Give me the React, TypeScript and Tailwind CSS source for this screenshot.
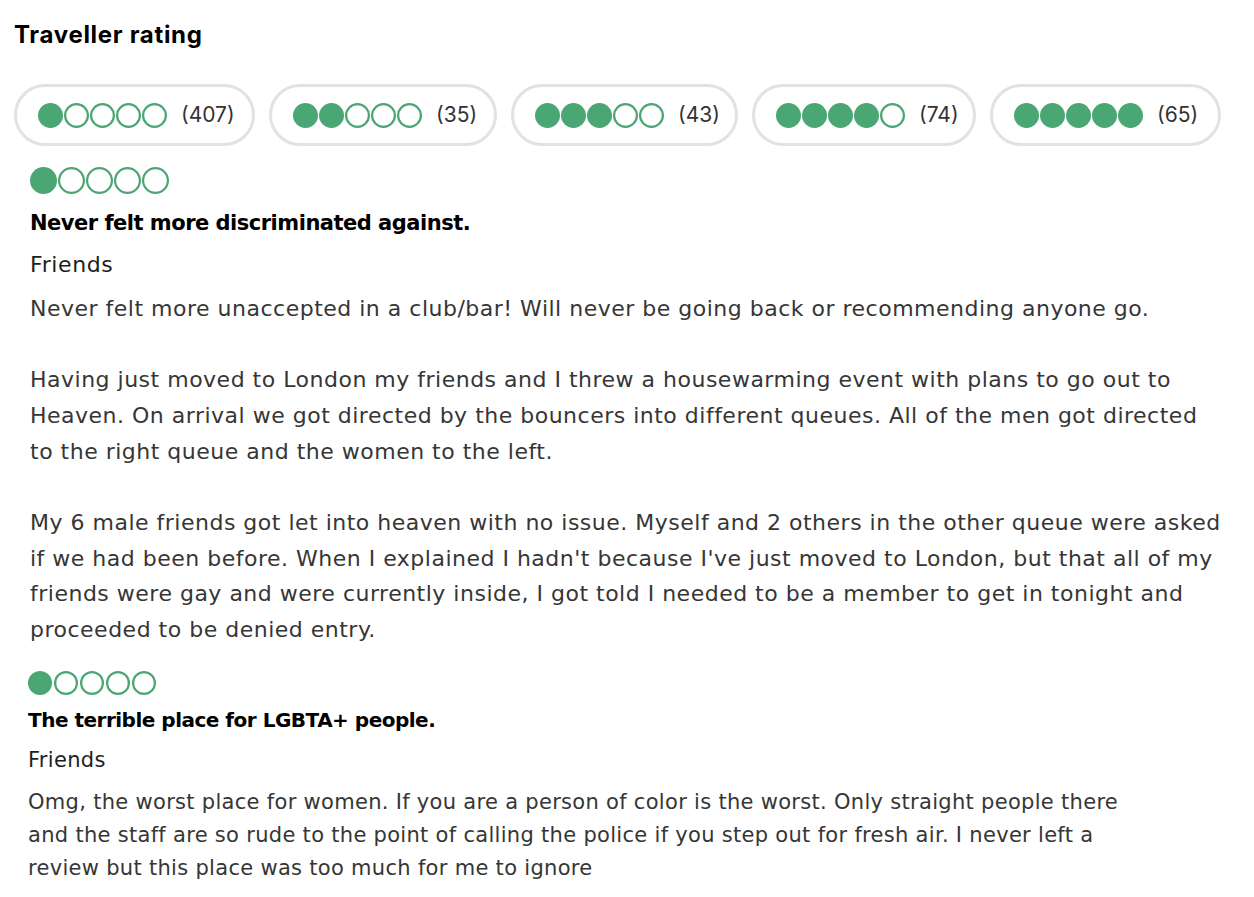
import React from "react";

const GREEN = "#4aa673";

interface BubblesProps {
  rating: number;
  size: number;
  step: number;
}

const Bubbles = ({ rating, size, step }: BubblesProps) => {
  const r = size / 2;
  const width = step * 4 + size;
  return (
    <svg width={width} height={size} viewBox={`0 0 ${width} ${size}`} className="block shrink-0">
      {[0, 1, 2, 3, 4].map((i) =>
        i < rating ? (
          <circle key={i} cx={i * step + r} cy={r} r={r} fill={GREEN} />
        ) : (
          <circle key={i} cx={i * step + r} cy={r} r={r - 1.1} fill="none" stroke={GREEN} strokeWidth={2.2} />
        )
      )}
    </svg>
  );
};

const filters = [
  { rating: 1, count: 407, width: "w-[241px]" },
  { rating: 2, count: 35, width: "w-[228px]" },
  { rating: 3, count: 43, width: "w-[227px]" },
  { rating: 4, count: 74, width: "w-[224px]" },
  { rating: 5, count: 65, width: "w-[231px]" },
];

const review1 = [
  "Never felt more unaccepted in a club/bar! Will never be going back or recommending anyone go.",
  "",
  "Having just moved to London my friends and I threw a housewarming event with plans to go out to",
  "Heaven. On arrival we got directed by the bouncers into different queues. All of the men got directed",
  "to the right queue and the women to the left.",
  "",
  "My 6 male friends got let into heaven with no issue. Myself and 2 others in the other queue were asked",
  "if we had been before. When I explained I hadn't because I've just moved to London, but that all of my",
  "friends were gay and were currently inside, I got told I needed to be a member to get in tonight and",
  "proceeded to be denied entry.",
];

const review2 = [
  "Omg, the worst place for women. If you are a person of color is the worst. Only straight people there",
  "and the staff are so rude to the point of calling the police if you step out for fresh air. I never left a",
  "review but this place was too much for me to ignore",
];

const App = () => {
  return (
    <div className="w-[1254px] h-[897px] bg-white overflow-hidden font-['DejaVu_Sans',sans-serif] text-[#363636]">
      <div className="pl-[14px] pt-[19px]">
        <h2 className="font-['Inter',sans-serif] text-[24px] leading-[32px] font-bold text-black tracking-[0.7px]">
          Traveller rating
        </h2>

        <div className="flex gap-[14px] mt-[33px]">
          {filters.map((f) => (
            <button
              key={f.rating}
              className={`${f.width} h-[62px] flex items-center gap-[14px] pl-[21px] border-[3px] border-[#e2e2e2] rounded-full bg-white`}
            >
              <Bubbles rating={f.rating} size={25} step={26} />
              <span className="font-['Inter',sans-serif] text-[21px] text-[#333]">({f.count})</span>
            </button>
          ))}
        </div>
      </div>

      {/* first review */}
      <div className="pl-[30px] pt-[21px]">
        <Bubbles rating={1} size={27} step={28} />
        <h3 className="mt-[14px] text-[21px] leading-[30px] font-bold text-black tracking-[-0.5px]">
          Never felt more discriminated against.
        </h3>
        <p className="mt-[12px] text-[22px] leading-[30px] text-[#1e1e1e] tracking-[0.6px]">Friends</p>
        <div className="mt-[11px] text-[22px] leading-[35.67px] tracking-[0.5px] whitespace-nowrap">
          {review1.map((line, i) => (
            <div key={i} className="h-[35.67px]">{line}</div>
          ))}
        </div>
      </div>

      {/* second review */}
      <div className="pl-[28px] pt-[23px]">
        <Bubbles rating={1} size={24} step={26} />
        <h3 className="mt-[11px] text-[20px] leading-[28px] font-bold text-black tracking-[-0.5px]">
          The terrible place for LGBTA+ people.
        </h3>
        <p className="mt-[12px] text-[21px] leading-[28px] text-[#1e1e1e] tracking-[0.3px]">Friends</p>
        <div className="mt-[12px] text-[21px] leading-[33px] tracking-[0.3px] whitespace-nowrap">
          {review2.map((line, i) => (
            <div key={i}>{line}</div>
          ))}
        </div>
      </div>
    </div>
  );
};

export default App;
